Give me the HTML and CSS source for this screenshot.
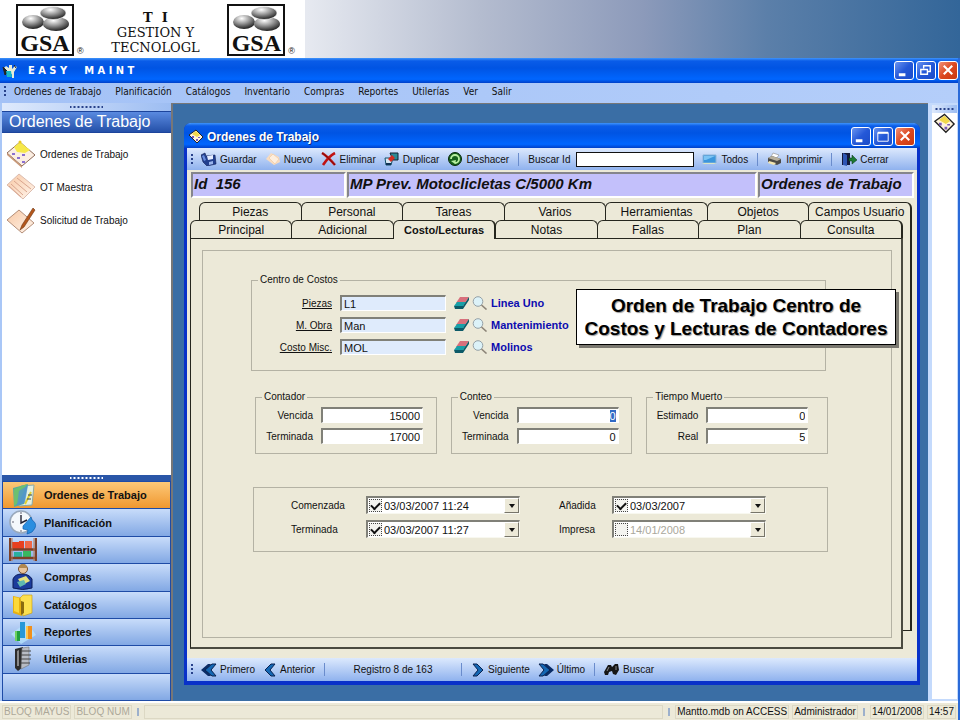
FILE: index.html
```html
<!DOCTYPE html>
<html lang="es">
<head>
    <meta charset="UTF-8">
    <meta name="viewport" content="width=device-width, initial-scale=1.0">
    <title>Easy Maint - Ordenes de Trabajo</title>
    <link rel="stylesheet" href="styles.css">
</head>
<body>
    <!-- Shared icons -->
    <svg class="defs" aria-hidden="true">
        <defs>
            <radialGradient id="stone" cx="0.4" cy="0.25" r="0.8">
                <stop offset="0" stop-color="#fff"/>
                <stop offset="0.45" stop-color="#999"/>
                <stop offset="1" stop-color="#111"/>
            </radialGradient>
            <linearGradient id="peach" x1="0" y1="0" x2="1" y2="1">
                <stop offset="0" stop-color="#f8c8a4"/>
                <stop offset="1" stop-color="#fff6ee"/>
            </linearGradient>
        </defs>
        <symbol id="stones" viewBox="0 0 54 26">
            <ellipse cx="15" cy="16" rx="11" ry="7" fill="url(#stone)"/>
            <ellipse cx="38" cy="18" rx="13" ry="7" fill="url(#stone)"/>
            <ellipse cx="35" cy="7" rx="13" ry="6.500" fill="url(#stone)" stroke="#fff" stroke-width=".6"/>
        </symbol>
        <symbol id="order" viewBox="0 0 30 28">
            <path d="M1 13 14 2 29 15 16 26z" fill="#fbeee2" stroke="#8d6a58"/>
            <path d="M1 13v2l15 13v-2z" fill="#c89878"/>
            <path d="M8 7 14 2l10 8-5 3-8-1z" fill="#f6e84a"/>
            <circle cx="14" cy="2" r="1.5" fill="#e8c820"/>
            <path d="M6 13h3v2H6zM11 17h3v2h-3zM16 21h3v2h-3zM16 14h3v2h-3z" fill="#8a6fd0"/>
        </symbol>
        <symbol id="master" viewBox="0 0 30 28">
            <path d="M1 12 13 1 29 14 17 26z" fill="url(#peach)" stroke="#dcbcae"/>
            <path d="m5 11 12 11M8 8l13 11M11 5l14 11M3 13l12 11" stroke="#d9a58e" fill="none"/>
        </symbol>
        <symbol id="request" viewBox="0 0 30 28">
            <path d="M1 14 13 4 28 17 16 27z" fill="url(#peach)" stroke="#b48e78"/>
            <path d="m14 24 2-5L27 2l2 2-11 17z" fill="#b5571c" stroke="#6a3410" stroke-width=".6"/>
        </symbol>
        <symbol id="paper" viewBox="0 0 16 16">
            <path d="M1 6 8 1l7 7-6 6z" fill="#fff3dc" stroke="#222"/>
            <path d="m4 5 4-3 4 4-3 2z" fill="#f2d84a"/>
            <path d="M4 7h2v2H4zM8 10h2v2H8zM10 8h2v1h-2z" fill="#7a5ab8"/>
        </symbol>
        <symbol id="save" viewBox="0 0 16 14">
            <path d="M0 3 4 1l1 3 9-1 1 9-9 2-4-4z" fill="#23408f" stroke="#0d1d55" stroke-width=".6"/>
            <path d="m6 4 6-1v4l-5 1z" fill="#e4ecff"/>
            <path d="m8 10 4-1v3l-4 1z" fill="#9ab4ec"/>
            <path d="m1 4 2-1 2 5-2 1z" fill="#6a8ee0"/>
        </symbol>
        <symbol id="new" viewBox="0 0 16 14">
            <path d="M1 7 6 1l8 4 1 5-6 3z" fill="#f8dcc0"/>
            <path d="M4 6 8 2l6 5-4 5z" fill="#fdeede" stroke="#ecc49c" stroke-width=".6"/>
        </symbol>
        <symbol id="delete" viewBox="0 0 16 14">
            <path d="M1 1q5 3 13 12M14 1Q8 4 2 13" fill="none" stroke="#c01414" stroke-width="2.6"/>
            <path d="M1 1q5 3 13 12" fill="none" stroke="#5a0808" stroke-width=".7"/>
        </symbol>
        <symbol id="copy" viewBox="0 0 16 14">
            <path d="M6 1h8v7H9z" fill="#2d8a94" stroke="#123"/>
            <path d="M1 6h8l-2 7H2z" fill="#d8e8f4" stroke="#13506a"/>
            <path d="m4 7 4-4 3 3-4 4z" fill="#d42c20"/>
            <path d="M2 11h5v2H2z" fill="#135"/>
        </symbol>
        <symbol id="undo" viewBox="0 0 16 14">
            <circle cx="8" cy="7" r="6.5" fill="#17631c" stroke="#0a2a0c"/>
            <path d="M4 7a4 4 0 1 1 4 4" fill="none" stroke="#b8f0a0" stroke-width="1.8"/>
            <path d="m4 9 5-1-1 4z" fill="#b8f0a0"/>
        </symbol>
        <symbol id="screen" viewBox="0 0 16 14">
            <path d="M1 3h13v8H1z" fill="#3c96dc" stroke="#8ab4d8"/>
            <path d="M2 4h11L4 8H2z" fill="#7cc4f4"/>
            <path d="M0 11h12l3 1H2z" fill="#d8e4c8"/>
        </symbol>
        <symbol id="printer" viewBox="0 0 16 14">
            <path d="m6 1 6 2-3 4-5-2z" fill="#fff" stroke="#888" stroke-width=".6"/>
            <path d="m1 6 4-2 9 3v4l-4 2-9-3z" fill="#4c4a46"/>
            <path d="m1 6 4-2 9 3-4 2z" fill="#b8b09c"/>
            <path d="m2 9 7 2-2 2-6-2z" fill="#f4e6b0"/>
        </symbol>
        <symbol id="exit" viewBox="0 0 16 14">
            <path d="M1 1h8v12H1z" fill="#141a3c"/>
            <path d="m2 1 4 2v11l-4-1z" fill="#2e56b4"/>
            <path d="M8 6h3V3l5 5-5 4v-3H8z" fill="#1b7a32" stroke="#0b3014" stroke-width=".5"/>
        </symbol>
        <symbol id="first" viewBox="0 0 16 14">
            <path d="M10 1H7L0 7l7 6h3L6 7z" fill="#0a2c66"/>
            <path d="M15 1h-4L4 7l7 6h4l-5-6z" fill="#1467b4" stroke="#0a2250"/>
        </symbol>
        <symbol id="prev" viewBox="0 0 12 14">
            <path d="M11 1H7L1 7l6 6h4L6 7z" fill="#1467b4" stroke="#0a2250"/>
        </symbol>
        <symbol id="binoculars" viewBox="0 0 16 14">
            <path d="M4 2h3l1 2 3-3h3l1 6-3 5-3-1-1-3-3 1-1 3H1L0 9z" fill="#161616"/>
            <path d="M5 4 3 8M12 3v4" stroke="#888"/>
        </symbol>
        <symbol id="eraser" viewBox="0 0 16 14">
            <path d="M6 1h9l-4 6H2z" fill="#d8707c"/>
            <path d="M3 6h9l-3 4H0z" fill="#18a0a8"/>
            <path d="M0 10h9l6-9v3L9 13H1z" fill="#0c5a68"/>
        </symbol>
        <symbol id="lens" viewBox="0 0 16 14">
            <circle cx="6" cy="5.5" r="4.8" fill="#dcf2f8" stroke="#94a0a6"/>
            <path d="m9.500 9 5 4.500" stroke="#8c8478" stroke-width="1.6"/>
        </symbol>
        <symbol id="n-orders" viewBox="0 0 28 26">
            <path d="m12 4 13-1-2 20-13 1z" fill="#e4f0e0" stroke="#8aa"/>
            <path d="m4 6 15-4-4 20L5 25z" fill="#58a8a0"/>
            <path d="m5 7 13-5-8 18-5 4z" fill="#6cc070"/>
            <path d="m10 9 9-6-3 18-8 2z" fill="#5090d8" opacity=".7"/>
            <path d="m16 22 6-12" stroke="#e0d030" stroke-width="2"/>
            <path d="M19 13h4M18 17h4" stroke="#345"/>
        </symbol>
        <symbol id="n-plan" viewBox="0 0 28 26">
            <circle cx="12" cy="12" r="11" fill="#f4f8fc" stroke="#98a8bc" stroke-width="1.600"/>
            <path d="M12 5v8l6-3" fill="none" stroke="#223" stroke-width="1.4"/>
            <path d="M12 2v2M3 12h2M12 20v2M20 12h2" stroke="#667"/>
            <path d="m14 16 8-9 1 3q5 3 3 8-2 5-8 6l1-4-5-1z" fill="#2a8ee0" stroke="#1060b0" stroke-width=".7"/>
        </symbol>
        <symbol id="n-inv" viewBox="0 0 28 26">
            <path d="M3 5h7v7H3zM10 4h5v8h-5z" fill="#e84020"/>
            <path d="M16 4h7v8h-7z" fill="#f06848"/>
            <path d="M5 15h8v5H5z" fill="#28b0a0"/>
            <path d="M14 14h8v6h-8z" fill="#38b860"/>
            <path d="M1 1v23M27 1v23M1 12.500h26M1 21h26" stroke="#7c4028" stroke-width="2.4"/>
            <path d="M3 1v23M25 1v23" stroke="#b87850"/>
        </symbol>
        <symbol id="n-buy" viewBox="0 0 28 26">
            <path d="M4 24V15q2-5 9-5t10 5v9q-9 3-19 0z" fill="#1c3c9c" stroke="#0c1c58"/>
            <circle cx="14" cy="5" r="4.500" fill="#e8c49c" stroke="#7a5030"/>
            <path d="M10 4q0-4 4-4t4 4z" fill="#b08850"/>
            <path d="m9 15 8-3 4 5-8 4z" fill="#e4e080"/>
            <path d="m8 18 7-2 2 4-6 3z" fill="#60b8b0"/>
        </symbol>
        <symbol id="n-cat" viewBox="0 0 28 26">
            <path d="m4 4 9 2v18l-9-3z" fill="#e8b010"/>
            <path d="m11 6 3-3h9v18l-9 3z" fill="#fce050" stroke="#c89808" stroke-width=".6"/>
            <path d="m12 9 3 1v11l-3 2z" fill="#8a6a10"/>
            <path d="m5 5 5 1v15l-5-2z" fill="#fcd838"/>
        </symbol>
        <symbol id="n-rep" viewBox="0 0 28 26">
            <path d="M2 15 18 3l9 13-15 9z" fill="#b8e4fc" opacity=".8"/>
            <path d="M6 12h5v10H6z" fill="#20a040"/>
            <path d="M11 3h5v16h-5z" fill="#2898d8"/>
            <path d="M17 7h6v13h-6z" fill="#f0901c"/>
            <path d="M17 7h2v13h-2z" fill="#fcc850"/>
            <path d="M6 12h2v10H6z" fill="#70d060"/>
        </symbol>
        <symbol id="n-util" viewBox="0 0 28 26">
            <path d="m6 3 8-2v20l-5 4-3-3z" fill="#2c2c2c"/>
            <path d="m13 2 7-1v18l-8 4z" fill="#b8bcc4" stroke="#666" stroke-width=".5"/>
            <path d="M12 5h10M12 9h10M12 13h10M12 17h9" stroke="#444"/>
            <path d="m8 5 2-1v16H8z" fill="#888"/>
        </symbol>
        <symbol id="robot" viewBox="0 0 16 16">
            <path d="M2 5 4 3l3 2V2h3v4l3-3 2 1-3 5v6h-2v-4l-2 1z" fill="#e8ecd8"/>
            <path d="m1 4 5 5-3 3zM12 2l2 3" stroke="#222" fill="#222"/>
            <path d="M4 8h5l1 6H5z" fill="#18b8c8"/>
        </symbol>
    </svg>

    <header class="banner">
        <div class="brand">
            <div class="gsa">
                <div class="gsa-box"><svg><use href="#stones"/></svg><span>GSA</span></div>
                <span class="gsa-reg">®</span>
            </div>
            <div class="brand-name">
                <span class="brand-ti">T&nbsp; I</span>
                <span>GESTION Y</span>
                <span>TECNOLOGL</span>
            </div>
            <div class="gsa">
                <div class="gsa-box"><svg><use href="#stones"/></svg><span>GSA</span></div>
                <span class="gsa-reg">®</span>
            </div>
        </div>
    </header>

    <div class="app">
        <div class="titlebar">
            <svg class="ico16"><use href="#robot"/></svg>
            <h1 class="app-title">E A S Y     M A I N T</h1>
            <div class="controls">
                <button type="button" class="ctl" aria-label="Minimizar"><svg viewBox="0 0 19 18"><path d="M4 12h7v3H4z" fill="#fff"/></svg></button>
                <button type="button" class="ctl" aria-label="Restaurar"><svg viewBox="0 0 19 18"><path d="M7 7V4h7v6h-3M4 8h7v5H4z" fill="none" stroke="#fff" stroke-width="1.5"/></svg></button>
                <button type="button" class="ctl close" aria-label="Cerrar"><svg viewBox="0 0 19 18"><path d="m5 4 9 9M14 4l-9 9" stroke="#fff" stroke-width="2.2"/></svg></button>
            </div>
        </div>

        <nav class="menubar">
            <span class="grip"></span>
            <button type="button">Ordenes de Trabajo</button>
            <button type="button">Planificación</button>
            <button type="button">Catálogos</button>
            <button type="button">Inventario</button>
            <button type="button">Compras</button>
            <button type="button">Reportes</button>
            <button type="button">Utilerías</button>
            <button type="button">Ver</button>
            <button type="button">Salir</button>
        </nav>

        <div class="workspace">
            <aside class="sidebar">
                <div class="hgrip"></div>
                <h2 class="side-title">Ordenes de Trabajo</h2>
                <div class="side-list">
                    <a href="#"><svg><use href="#order"/></svg>Ordenes de Trabajo</a>
                    <a href="#"><svg><use href="#master"/></svg>OT Maestra</a>
                    <a href="#"><svg><use href="#request"/></svg>Solicitud de Trabajo</a>
                </div>
                <div class="hgrip dark"></div>
                <div class="side-nav">
                    <button type="button" class="active"><svg><use href="#n-orders"/></svg>Ordenes de Trabajo</button>
                    <button type="button"><svg><use href="#n-plan"/></svg>Planificación</button>
                    <button type="button"><svg><use href="#n-inv"/></svg>Inventario</button>
                    <button type="button"><svg><use href="#n-buy"/></svg>Compras</button>
                    <button type="button"><svg><use href="#n-cat"/></svg>Catálogos</button>
                    <button type="button"><svg><use href="#n-rep"/></svg>Reportes</button>
                    <button type="button"><svg><use href="#n-util"/></svg>Utilerias</button>
                    <div class="side-foot"></div>
                </div>
            </aside>

            <main class="mdi">
                <section class="window">
                    <div class="titlebar">
                        <svg class="ico16"><use href="#paper"/></svg>
                        <h2 class="win-title">Ordenes de Trabajo</h2>
                        <div class="controls">
                            <button type="button" class="ctl" aria-label="Minimizar"><svg viewBox="0 0 19 18"><path d="M4 12h7v3H4z" fill="#fff"/></svg></button>
                            <button type="button" class="ctl" aria-label="Maximizar"><svg viewBox="0 0 19 18"><path d="M4 5h11v9H4z" fill="none" stroke="#fff"/><path d="M4 4h11v2H4z" fill="#fff"/></svg></button>
                            <button type="button" class="ctl close" aria-label="Cerrar"><svg viewBox="0 0 19 18"><path d="m5 4 9 9M14 4l-9 9" stroke="#fff" stroke-width="2.2"/></svg></button>
                        </div>
                    </div>

                    <div class="toolbar">
                        <span class="grip"></span>
                        <button type="button"><svg><use href="#save"/></svg>Guardar</button>
                        <button type="button"><svg><use href="#new"/></svg>Nuevo</button>
                        <button type="button"><svg><use href="#delete"/></svg>Eliminar</button>
                        <button type="button"><svg><use href="#copy"/></svg>Duplicar</button>
                        <button type="button"><svg><use href="#undo"/></svg>Deshacer</button>
                        <span class="sep"></span>
                        <label for="buscar-id">Buscar Id</label>
                        <input type="text" id="buscar-id" class="search">
                        <button type="button"><svg><use href="#screen"/></svg>Todos</button>
                        <span class="sep"></span>
                        <button type="button"><svg><use href="#printer"/></svg>Imprimir</button>
                        <span class="sep"></span>
                        <button type="button"><svg><use href="#exit"/></svg>Cerrar</button>
                    </div>

                    <div class="record">
                        <div>Id&nbsp; 156</div>
                        <div>MP Prev. Motoclicletas C/5000 Km</div>
                        <div>Ordenes de Trabajo</div>
                    </div>

                    <div class="book">
                        <div class="tabs tabs-back">
                            <button type="button">Piezas</button>
                            <button type="button">Personal</button>
                            <button type="button">Tareas</button>
                            <button type="button">Varios</button>
                            <button type="button">Herramientas</button>
                            <button type="button">Objetos</button>
                            <button type="button">Campos Usuario</button>
                        </div>
                        <div class="tabs tabs-front">
                            <button type="button">Principal</button>
                            <button type="button">Adicional</button>
                            <button type="button" class="active">Costo/Lecturas</button>
                            <button type="button">Notas</button>
                            <button type="button">Fallas</button>
                            <button type="button">Plan</button>
                            <button type="button">Consulta</button>
                        </div>
                        <div class="sheet">
                            <div class="panel">
                                <fieldset class="costs">
                                    <legend>Centro de Costos</legend>
                                    <div class="cost-row">
                                        <label for="piezas">Piezas</label>
                                        <input type="text" id="piezas" value="L1">
                                        <span class="cost-icons"><svg><use href="#eraser"/></svg><svg><use href="#lens"/></svg></span>
                                        <strong>Linea Uno</strong>
                                    </div>
                                    <div class="cost-row">
                                        <label for="obra">M. Obra</label>
                                        <input type="text" id="obra" value="Man">
                                        <span class="cost-icons"><svg><use href="#eraser"/></svg><svg><use href="#lens"/></svg></span>
                                        <strong>Mantenimiento</strong>
                                    </div>
                                    <div class="cost-row">
                                        <label for="misc">Costo Misc.</label>
                                        <input type="text" id="misc" value="MOL">
                                        <span class="cost-icons"><svg><use href="#eraser"/></svg><svg><use href="#lens"/></svg></span>
                                        <strong>Molinos</strong>
                                    </div>
                                </fieldset>

                                <div class="counters">
                                    <fieldset>
                                        <legend>Contador</legend>
                                        <label for="c-vencida">Vencida</label>
                                        <input type="text" id="c-vencida" value="15000">
                                        <label for="c-terminada">Terminada</label>
                                        <input type="text" id="c-terminada" value="17000">
                                    </fieldset>
                                    <fieldset>
                                        <legend>Conteo</legend>
                                        <label for="k-vencida">Vencida</label>
                                        <input type="text" id="k-vencida" value="0" autofocus>
                                        <label for="k-terminada">Terminada</label>
                                        <input type="text" id="k-terminada" value="0">
                                    </fieldset>
                                    <fieldset class="narrow">
                                        <legend>Tiempo Muerto</legend>
                                        <label for="estimado">Estimado</label>
                                        <input type="text" id="estimado" value="0">
                                        <label for="real">Real</label>
                                        <input type="text" id="real" value="5">
                                    </fieldset>
                                </div>

                                <div class="dates">
                                    <label for="comenzada">Comenzada</label>
                                    <div class="picker">
                                        <input type="checkbox" aria-label="Usar fecha comenzada" checked>
                                        <select id="comenzada"><option>03/03/2007 11:24</option></select>
                                        <span class="arrow"></span>
                                    </div>
                                    <label for="anadida" class="second">Añadida</label>
                                    <div class="picker">
                                        <input type="checkbox" aria-label="Usar fecha añadida" checked>
                                        <select id="anadida"><option>03/03/2007</option></select>
                                        <span class="arrow"></span>
                                    </div>
                                    <label for="terminada">Terminada</label>
                                    <div class="picker">
                                        <input type="checkbox" aria-label="Usar fecha terminada" checked>
                                        <select id="terminada"><option>03/03/2007 11:27</option></select>
                                        <span class="arrow"></span>
                                    </div>
                                    <label for="impresa" class="second">Impresa</label>
                                    <div class="picker off">
                                        <input type="checkbox" aria-label="Usar fecha impresa">
                                        <select id="impresa"><option>14/01/2008</option></select>
                                        <span class="arrow"></span>
                                    </div>
                                </div>
                            </div>
                        </div>
                        <p class="callout">Orden de Trabajo Centro de<br>Costos y Lecturas de Contadores</p>
                    </div>

                    <div class="toolbar bottom">
                        <span class="grip"></span>
                        <button type="button"><svg><use href="#first"/></svg>Primero</button>
                        <button type="button"><svg class="small"><use href="#prev"/></svg>Anterior</button>
                        <span class="sep"></span>
                        <span class="counter">Registro 8 de 163</span>
                        <span class="sep"></span>
                        <button type="button"><svg class="small flip"><use href="#prev"/></svg>Siguiente</button>
                        <button type="button"><svg class="flip"><use href="#first"/></svg>Último</button>
                        <span class="sep"></span>
                        <button type="button"><svg><use href="#binoculars"/></svg>Buscar</button>
                    </div>
                </section>
            </main>

            <aside class="strip">
                <div class="hgrip"></div>
                <div class="strip-list"><svg><use href="#paper"/></svg></div>
            </aside>
        </div>

        <footer class="status">
            <span class="cell muted">BLOQ MAYUS</span>
            <span class="cell muted">BLOQ NUM</span>
            <span class="bar"></span>
            <span class="cell fill"></span>
            <span class="bar"></span>
            <span class="cell">Mantto.mdb on ACCESS</span>
            <span class="cell">Administrador</span>
            <span class="bar"></span>
            <span class="cell">14/01/2008</span>
            <span class="cell">14:57</span>
        </footer>
    </div>

    <script>
        document.getElementById('k-vencida').select();
    </script>
</body>
</html>
```

FILE: styles.css
```css
* {
    margin: 0;
    padding: 0;
    box-sizing: border-box;
}

body {
    min-height: 100vh;
    display: flex;
    flex-direction: column;
    font-family: "Liberation Sans", Arial, sans-serif;
    font-size: 10px;
    color: #111;
    background: #3a6ea5;
}

button, input, select {
    font: inherit;
    color: inherit;
    border: none;
    background: none;
    outline: none;
}

.defs {
    position: absolute;
    width: 0;
    height: 0;
}

/* top banner */
.banner {
    height: 58px;
    background: linear-gradient(to right, #e6e9f0 32%, #b4bccf 50%, #8c9aba 67%, #5b7fa9 80%, #336699);
}

.brand {
    width: 305px;
    height: 58px;
    padding: 4px 10px 0 16px;
    background: #fff;
    display: flex;
    justify-content: space-between;
}

.gsa {
    display: flex;
    align-items: flex-end;
    height: 52px;
    gap: 3px;
}

.gsa-box {
    width: 58px;
    height: 52px;
    display: flex;
    flex-direction: column;
    align-items: center;
    border: 2px solid #111;
    font: bold 24px/22px "Liberation Serif", serif;
}

.gsa-box svg {
    width: 54px;
    height: 26px;
}

.gsa-reg {
    font-size: 9px;
}

.brand-name {
    display: flex;
    flex-direction: column;
    align-items: center;
    padding-top: 6px;
    font: 13px/15px "DejaVu Serif", "Liberation Serif", serif;
}

.brand-ti {
    font-weight: bold;
}

/* application frame */
.app {
    flex: 1;
    display: flex;
    flex-direction: column;
    border-right: 2px solid #2a6ad8;
    background: #a9c7f7;
}

.titlebar {
    height: 25px;
    display: flex;
    align-items: center;
    gap: 3px;
    padding: 0 0 0 2px;
    color: #fff;
    background: linear-gradient(#3f94fb 0, #0a5ce8 12%, #0054e3 40%, #0066ff 85%, #0040c8 100%);
}

.ico16 {
    width: 16px;
    height: 16px;
}

.app-title {
    margin-left: 7px;
    font: bold 11px "DejaVu Sans Condensed", sans-serif;
    white-space: pre;
}

.win-title {
    font-size: 12px;
    text-shadow: 1px 1px #0a2c80;
}

.controls {
    margin-left: auto;
    display: flex;
    gap: 2px;
}

.ctl {
    width: 20px;
    height: 19px;
    border: 1px solid #fff;
    border-radius: 3px;
    background: linear-gradient(135deg, #6a94f0, #2458d8 50%, #1c4cc8);
    overflow: hidden;
}

.ctl svg {
    display: block;
    width: 18px;
    height: 17px;
}

.ctl.close {
    background: linear-gradient(135deg, #f09078, #dc4820 50%, #c83810);
}

.menubar {
    height: 20px;
    display: flex;
    align-items: center;
    gap: 14px;
    padding: 0 0 3px 4px;
    font-family: "DejaVu Sans Condensed", "DejaVu Sans", sans-serif;
    background: linear-gradient(to right, #a4c2f6, #b4cefa);
}

.grip {
    width: 2px;
    height: 11px;
    background: repeating-linear-gradient(#27418a 0 2px, transparent 2px 4px);
}

.menubar .grip {
    margin-right: -6px;
}

.workspace {
    flex: 1;
    display: flex;
}

/* left panel */
.sidebar {
    width: 171px;
    padding-left: 2px;
    display: flex;
    flex-direction: column;
}

.hgrip {
    height: 8px;
    background: radial-gradient(circle, #27418a 1px, transparent 1px) center / 4px 8px repeat-x content-box, linear-gradient(to right, #dfeafc, #9dbdf2);
    padding: 0 68px;
}

.hgrip.dark {
    height: 6px;
    background: radial-gradient(circle, #fff 1px, transparent 1px) center / 4px 6px repeat-x content-box, #2a56a8;
}

.side-title {
    height: 22px;
    padding-left: 7px;
    font-size: 16px;
    font-weight: normal;
    line-height: 20px;
    color: #fff;
    background: linear-gradient(#5a8ae0, #2450a8);
    border: 1px solid #1c449c;
    border-width: 1px 0;
}

.side-list {
    flex: 1;
    display: flex;
    flex-direction: column;
    gap: 5px;
    padding: 7px 4px;
    background: #fff;
}

.side-list a {
    display: flex;
    align-items: center;
    gap: 4px;
    color: #111;
    text-decoration: none;
}

.side-list svg {
    width: 30px;
    height: 28px;
}

.side-nav {
    height: 220px;
    display: grid;
    grid-auto-rows: 1fr;
    border: 1px solid #1e4ba6;
    border-width: 0 1px 1px;
}

.side-nav button {
    display: flex;
    align-items: center;
    gap: 7px;
    padding-left: 6px;
    font-size: 11px;
    font-weight: bold;
    border-top: 1px solid #1e4ba6;
    background: linear-gradient(#c8dcfa, #82a8e4);
}

.side-nav button.active {
    background: linear-gradient(#fcc878, #f09830);
}

.side-nav svg {
    width: 28px;
    height: 26px;
}

.side-foot {
    border-top: 1px solid #1e4ba6;
    background: linear-gradient(#c8dcfa, #82a8e4);
}

/* mdi area */
.mdi {
    flex: 1;
    display: flex;
    padding: 19px 8px 16px 11px;
    background: #3a6ea5;
    border: 1px solid #777;
    border-width: 1px 0 0 2px;
}

.strip {
    width: 30px;
    padding: 2px 1px 2px 4px;
    background: #c4dafc;
    display: flex;
    flex-direction: column;
}

.strip .hgrip {
    padding: 0 2px;
}

.strip-list {
    flex: 1;
    background: #fff;
}

.strip-list svg {
    width: 25px;
    height: 22px;
}

.window {
    flex: 1;
    display: flex;
    flex-direction: column;
    border: 3px solid #0831c9;
    border-width: 0 3px 4px;
    border-radius: 7px 7px 0 0;
    background: #ece9d8;
}

.window .titlebar {
    margin: 0 -3px;
    padding: 2px 5px 0 4px;
    border-radius: 7px 7px 0 0;
}

.toolbar {
    height: 22px;
    display: flex;
    align-items: center;
    gap: 8px;
    padding-left: 4px;
    background: linear-gradient(#dce9fd, #8fb2ee);
}

.toolbar.bottom {
    height: 23px;
    margin-top: 9px;
}

.toolbar button {
    display: flex;
    align-items: center;
    gap: 3px;
}

.toolbar svg {
    width: 16px;
    height: 14px;
}

.toolbar svg.small {
    width: 14px;
}

.toolbar .flip {
    transform: scaleX(-1);
}

.sep {
    width: 1px;
    height: 13px;
    margin: 0 1px;
    background: #6a8ccc;
}

.search {
    width: 118px;
    height: 15px;
    border: 1px solid #111;
    background: #fff;
}

.toolbar label {
    margin-right: -2px;
}

.counter {
    width: 118px;
    text-align: center;
}

.record {
    display: grid;
    grid-template-columns: 155px 1fr 156px;
    gap: 1px;
    margin: 2px 3px 0 4px;
    font-size: 15px;
    font-weight: bold;
    font-style: italic;
    line-height: 19px;
}

.record div {
    height: 26px;
    padding-left: 1px;
    background: #c3c0fb;
    border: 2px solid #85858c;
    border-right-color: #fff;
    border-bottom-color: #fff;
}

/* tabs */
.book {
    position: relative;
    flex: 1;
    display: flex;
    flex-direction: column;
    margin-top: 4px;
}

/* the sheet behind, seen past the right edge */
.book::before {
    content: "";
    position: absolute;
    top: 10px;
    right: 5px;
    bottom: 18px;
    width: 30px;
    border-right: 2px solid #26261e;
    border-bottom: 1px solid #26261e;
}

.tabs {
    position: relative;
    display: flex;
    height: 18px;
}

.tabs-back {
    padding: 0 5px 0 12px;
}

.tabs-front {
    z-index: 1;
    padding: 0 14px 0 3px;
}

.tabs button {
    flex: 1 1 0;
    height: 18px;
    margin-right: -1px;
    font-size: 12px;
    white-space: nowrap;
    border: 1px solid #26261e;
    border-bottom: none;
    border-radius: 6px 6px 0 0;
    background: #ece9d8;
}

.tabs button:last-child {
    margin-right: 0;
    border-right-width: 2px;
}

.tabs button.active {
    z-index: 1;
    height: 19px;
    font-size: 11px;
    font-weight: bold;
    border-right-width: 2px;
}

.sheet {
    position: relative;
    flex: 1;
    display: flex;
    margin: 0 14px 0 3px;
    padding: 11px 9px 9px 11px;
    background: #ece9d8;
    border: 1px solid #26261e;
    border-right: 2px solid #4a4a40;
    border-bottom: 2px solid #4a4a40;
}

.panel {
    flex: 1;
    padding: 23px 65px 0 48px;
    border: 1px solid #b4b2a4;
}

fieldset {
    border: 1px solid #b4b2a4;
    min-width: 0;
}

legend {
    margin-left: 6px;
    padding: 0 2px;
    line-height: 12px;
}

.panel input[type="text"] {
    width: 100%;
    height: 16px;
    padding: 0 2px;
    font-size: 11px;
    line-height: 13px;
    border: 2px solid #808078;
    border-right: 1px solid #fff;
    border-bottom: 1px solid #fff;
    background: #fff;
}

input::selection {
    color: #fff;
    background: #316ac5;
}

.costs {
    display: grid;
    gap: 6px;
    padding: 9px 0 15px;
}

.cost-row {
    display: grid;
    grid-template-columns: 80px 106px 34px 1fr;
    align-items: center;
    column-gap: 8px;
    height: 16px;
}

.cost-row label {
    text-align: right;
    text-decoration: underline;
}

.panel .cost-row input {
    background: #dfebfc;
}

.cost-icons {
    display: flex;
    gap: 2px;
}

.cost-icons svg {
    width: 16px;
    height: 14px;
}

.cost-row strong {
    margin-left: -5px;
    font-size: 11px;
    color: #0c0cb0;
}

.counters {
    display: grid;
    grid-template-columns: 1fr 1fr 1fr;
    gap: 14px;
    margin: 20px -2px 0 4px;
}

.counters fieldset {
    display: grid;
    grid-template-columns: 57px 102px;
    gap: 5px 8px;
    align-items: center;
    padding: 4px 0 9px;
}

.counters .narrow {
    grid-template-columns: 51px 102px;
}

.counters label {
    text-align: right;
}

.counters input {
    text-align: right;
}

.dates {
    display: grid;
    grid-template-columns: 75px 154px 92px 154px;
    row-gap: 6px;
    align-items: center;
    margin: 33px -2px 0 2px;
    padding: 8px 0 13px 37px;
    border: 1px solid #b4b2a4;
}

.second {
    padding-left: 39px;
}

.picker {
    display: flex;
    align-items: center;
    height: 18px;
    border: 2px solid #808078;
    border-right: 1px solid #f8f8f0;
    border-bottom: 1px solid #f8f8f0;
    background: #fff;
}

.picker input {
    appearance: none;
    display: grid;
    place-items: center;
    width: 13px;
    height: 13px;
    margin-left: 1px;
    border: 1px dotted #444;
    background: #f4f4f0;
}

/* tick mark */
.picker input:checked::before {
    content: "";
    width: 7px;
    height: 4px;
    margin-top: -2px;
    border: 1px solid #111;
    border-width: 0 0 2px 2px;
    transform: rotate(-45deg);
}

.picker select {
    flex: 1;
    appearance: none;
    padding-left: 2px;
    font-size: 11px;
    line-height: 14px;
}

.picker.off select {
    color: #aaa89c;
}

.arrow {
    width: 15px;
    height: 15px;
    display: grid;
    place-items: center;
    border: 1px solid #fff;
    border-right-color: #77756a;
    border-bottom-color: #77756a;
    background: #ece9d8;
    pointer-events: none;
}

.arrow::before {
    content: "";
    border: 3px solid transparent;
    border-top: 4px solid #111;
    border-bottom: none;
}

.callout {
    position: absolute;
    top: 87px;
    right: 21px;
    width: 320px;
    z-index: 2;
    padding: 4px 0;
    font-size: 19px;
    font-weight: bold;
    line-height: 23px;
    text-align: center;
    text-shadow: 1px 1px 1px #999;
    white-space: nowrap;
    color: #000;
    background: #fff;
    border: 1px solid #000;
    box-shadow: 3px 3px #7a7870;
}

/* status bar */
.status {
    height: 19px;
    display: flex;
    align-items: center;
    gap: 3px;
    padding: 0 2px;
    background: #ece9d8;
    border-top: 2px solid #fff;
}

.cell {
    height: 14px;
    padding: 0 1px;
    line-height: 12px;
    border: 1px solid #dcd8c4;
}

.muted {
    color: #aca899;
}

.fill {
    flex: 1;
}

.bar {
    width: 2px;
    height: 8px;
    margin: 0 2px;
    background: #9cb0cc;
}
```
